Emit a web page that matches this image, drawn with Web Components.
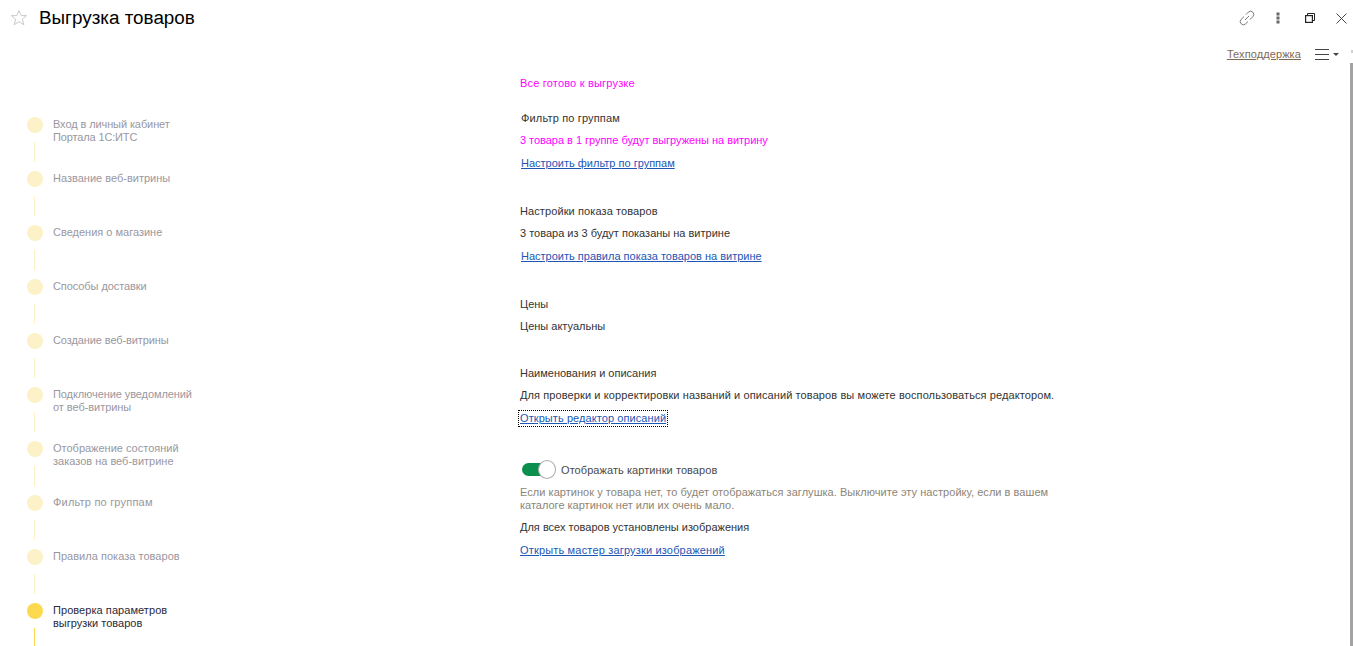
<!DOCTYPE html>
<html lang="ru"><head><meta charset="utf-8"><title>Выгрузка товаров</title>
<style>
html,body{margin:0;height:646px;overflow:hidden;background:#fff;font:11px/13px "Liberation Sans",Arial,sans-serif;color:#333}
</style></head><body>
<x-app>
  <x-header slot="header" title-text="Выгрузка товаров"></x-header>
  <x-toolbar slot="toolbar"></x-toolbar>
  <x-steps slot="steps">
    <x-step><span style="letter-spacing:-.1px">Вход в личный кабинет</span><br><span style="letter-spacing:-.14px">Портала 1С:ИТС</span></x-step>
    <x-step>Название веб-витрины</x-step>
    <x-step>Сведения о магазине</x-step>
    <x-step><span style="letter-spacing:-.08px">Способы доставки</span></x-step>
    <x-step><span style="letter-spacing:-.1px">Создание веб-витрины</span></x-step>
    <x-step><span style="letter-spacing:-.09px">Подключение уведомлений</span><br><span style="letter-spacing:-.05px">от веб-витрины</span></x-step>
    <x-step>Отображение состояний<br>заказов на веб-витрине</x-step>
    <x-step><span style="letter-spacing:.2px">Фильтр по группам</span></x-step>
    <x-step><span style="letter-spacing:.03px">Правила показа товаров</span></x-step>
    <x-step active><span style="letter-spacing:.06px">Проверка параметров</span><br>выгрузки товаров</x-step>
  </x-steps>
  <x-content slot="content"></x-content>
</x-app>
<template id="t-app"><style>
:host{display:block;height:646px;position:relative;overflow:hidden}
.body{display:grid;grid-template-columns:520px 1fr;height:574px}
.scroll{position:absolute;right:0;top:63px;width:3px;height:583px;background:#a3a3a3}
.up{position:absolute;right:0;top:50px;width:2px;height:3px;background:#d0d0d0}
</style>
<slot name="header"></slot><slot name="toolbar"></slot>
<div class="body"><slot name="steps"></slot><slot name="content"></slot></div>
<div class="up"></div><div class="scroll"></div></template>
<template id="t-header"><style>
:host{display:flex;align-items:center;height:36px;padding:0 0 0 10px;box-sizing:border-box}
svg{display:block}
.t{font-size:18.85px;line-height:22px;color:#000;margin-left:11px;flex:1}
.ic{display:flex;align-items:center;gap:7.5px}
.b{width:24px;height:24px;display:flex;align-items:center;justify-content:center}
</style>
<svg width="18" height="18" viewBox="0 0 18 18"><path d="M9 1.6l2.2 5h5.4l-4.3 3.6 1.6 5.6L9 12.7l-4.9 3.1 1.6-5.6L1.400 6.600h5.400z" fill="none" stroke="#c6cacd" stroke-width="1"/></svg>
<div class="t"></div>
<div class="ic">
<div class="b"><svg width="16" height="16" viewBox="0 0 16 16" fill="none" stroke="#777" stroke-width="1"><path d="M7 4.500l2.300-2.300a3 3 0 0 1 4.500 4.500L11 9.500M9 11.500l-2.300 2.300a3 3 0 0 1-4.500-4.500L5 6.500M6 10l4-4"/></svg></div>
<div class="b"><svg width="4" height="12" viewBox="0 0 4 12" fill="#666"><rect x=".5" y=".5" width="3" height="3"/><rect x=".5" y="4.500" width="3" height="3"/><rect x=".5" y="8.500" width="3" height="3"/></svg></div>
<div class="b"><svg width="10" height="10" viewBox="0 0 10 10" fill="none" stroke="#222" stroke-width="1"><rect x=".6" y="2.600" width="6.800" height="6.800" stroke-width="1.200"/><path d="M2.500 2.500v-2h7v7h-2"/></svg></div>
<div class="b"><svg width="11" height="11" viewBox="0 0 11 11" fill="none" stroke="#444" stroke-width="1"><path d="M.5.500l10 10M10.500.500l-10 10"/></svg></div>
</div></template>
<template id="t-toolbar"><style>
:host{display:flex;justify-content:flex-end;align-items:center;height:36px}
a{color:#7f6a55;text-decoration:underline;font-size:11px;line-height:13px;letter-spacing:.1px}
.m{display:flex;align-items:center;margin-left:14px;gap:4px;width:38px}
svg{display:block}
</style><a>Техподдержка</a>
<div class="m"><svg width="14" height="11" viewBox="0 0 14 11" stroke="#444" stroke-width="1"><path d="M0 .5h14M0 5.500h14M0 10.500h14"/></svg>
<svg width="6" height="3" viewBox="0 0 6 3" fill="#444"><path d="M0 0h6L3 3z"/></svg></div></template>
<template id="t-steps"><style>
:host{display:block;padding:45px 0 0 27px}
</style><slot></slot></template>
<template id="t-step"><style>
:host{display:grid;grid-template-columns:16px 1fr;column-gap:10px;height:54px;color:#9a97a0;font-size:11px;line-height:13px}
.c{height:54px}
.d{width:16px;height:16px;border-radius:50%;background:#fdf1c7}
.l{width:1px;height:20px;background:#fdf1c7;margin:9px 0 0 7px}
.x{padding-top:1px}
:host([active]){color:#2a2a3a}
:host([active]) .d,:host([active]) .l{background:#fdd94f}
</style><div class="c"><div class="d"></div><div class="l"></div></div><div class="x"><slot></slot></div></template>
<template id="t-content"><style>
:host{display:block;padding-top:5px;font-size:11px;line-height:13px;color:#333}
div,a{display:block;height:13px;white-space:nowrap}
.m{color:#f0f}
a{color:#1d56b4;text-decoration:underline;width:max-content}
.i{margin-left:1px}
.f{outline:1px dotted #000;outline-offset:1px}
.g{color:#8c8577;height:auto}
.sw{height:20px;display:flex;align-items:center;gap:5px;margin:35px 0 0 2px;color:#4a4a4a}
.tr{position:relative;width:34px;height:20px}
.bar{position:absolute;left:0;top:3px;width:24px;height:13px;border-radius:6.5px;background:#0a8f4c}
.kn{position:absolute;left:16px;top:0;width:18px;height:19px;box-sizing:border-box;border-radius:50%;background:#fff;border:1px solid #aaa}
</style>
<div class="m" style="letter-spacing:.19px">Все готово к выгрузке</div>
<div class="i" style="margin-top:22px;letter-spacing:.16px">Фильтр по группам</div>
<div class="m" style="margin-top:9px;letter-spacing:-.03px">3 товара в 1 группе будут выгружены на витрину</div>
<a class="i" style="margin-top:10px">Настроить фильтр по группам</a>
<div style="margin-top:35px;letter-spacing:.1px">Настройки показа товаров</div>
<div style="margin-top:9px">3 товара из 3 будут показаны на витрине</div>
<a class="i" style="margin-top:10px">Настроить правила показа товаров на витрине</a>
<div style="margin-top:35px">Цены</div>
<div style="margin-top:9px">Цены актуальны</div>
<div style="margin-top:34px">Наименования и описания</div>
<div style="margin-top:9px;letter-spacing:.1px">Для проверки и корректировки названий и описаний товаров вы можете воспользоваться редактором.</div>
<a class="f" style="margin-top:10px;letter-spacing:.08px">Открыть редактор описаний</a>
<div class="sw"><span class="tr"><span class="bar"></span><span class="kn"></span></span><span style="letter-spacing:.07px">Отображать картинки товаров</span></div>
<div class="g" style="margin-top:6px"><span style="letter-spacing:.04px">Если картинок у товара нет, то будет отображаться заглушка. Выключите эту настройку, если в вашем</span><br>каталоге картинок нет или их очень мало.</div>
<div style="margin-top:9px">Для всех товаров установлены изображения</div>
<a style="margin-top:10px;letter-spacing:.17px">Открыть мастер загрузки изображений</a>
</template>
<script>
function def(name,tid,init){customElements.define(name,class extends HTMLElement{constructor(){super();const s=this.attachShadow({mode:'open'});s.appendChild(document.getElementById(tid).content.cloneNode(true));if(init)init(this,s);}});}
def('x-app','t-app');
def('x-header','t-header',(h,s)=>{s.querySelector('.t').textContent=h.getAttribute('title-text')});
def('x-toolbar','t-toolbar');
def('x-steps','t-steps');
def('x-step','t-step');
def('x-content','t-content');
</script>
</body></html>
